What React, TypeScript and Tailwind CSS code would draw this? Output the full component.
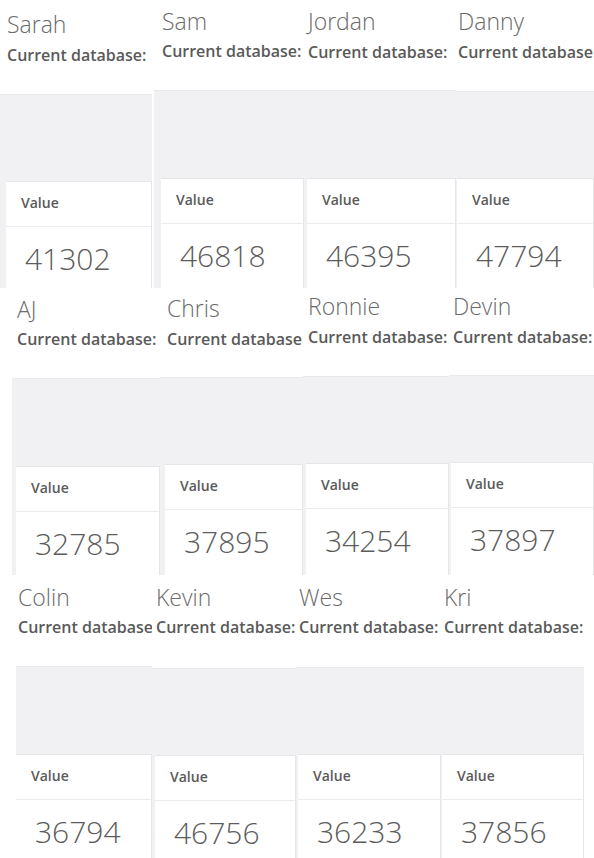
// each tile is a cropped screenshot, so offsets differ a little per tile
type Tile = {
  name: string;
  value: string;
  box: string; // tile width + top padding
  text: string; // left inset of name / label
  label: string;
  panel: string;
  card: string;
};

const rows: { h: string; tiles: Tile[] }[] = [
  {
    h: "h-[288px]",
    tiles: [
      { name: "Sarah", value: "41302", box: "w-[152px] pt-[9px]", text: "pl-[7px]", label: "mt-[5px]", panel: "mt-[28px] pt-[86px]", card: "ml-[6px]" },
      { name: "Sam", value: "46818", box: "w-[152px] pt-[6px]", text: "pl-[10px]", label: "mt-[4px]", panel: "mt-[28px] ml-[2px] pt-[87px]", card: "ml-[7px]" },
      { name: "Jordan", value: "46395", box: "w-[152px] pt-[6px]", text: "pl-[4px]", label: "mt-[5px]", panel: "mt-[27px] pt-[87px]", card: "ml-[3px]" },
      { name: "Danny", value: "47794", box: "w-[138px] pt-[6px]", text: "pl-[2px]", label: "mt-[5px]", panel: "mt-[28px] pt-[86px]", card: "ml-[1px]" },
    ],
  },
  {
    h: "h-[287px]",
    tiles: [
      { name: "AJ", value: "32785", box: "w-[160px] pt-[6px]", text: "pl-[17px]", label: "mt-[4px]", panel: "mt-[28px] ml-[12px] pt-[87px]", card: "ml-[4px]" },
      { name: "Chris", value: "37895", box: "w-[143px] pt-[5px]", text: "pl-[7px]", label: "mt-[5px]", panel: "mt-[27px] pt-[86px]", card: "ml-[5px]" },
      { name: "Ronnie", value: "34254", box: "w-[146px] pt-[3px]", text: "pl-[5px]", label: "mt-[5px]", panel: "mt-[28px] pt-[86px]", card: "ml-[3px]" },
      { name: "Devin", value: "37897", box: "w-[145px] pt-[3px]", text: "pl-[4px]", label: "mt-[5px]", panel: "mt-[27px] pt-[86px]", card: "ml-[2px]" },
    ],
  },
  {
    h: "h-[283px]",
    tiles: [
      { name: "Colin", value: "36794", box: "w-[152px] pt-[7px]", text: "pl-[18px]", label: "mt-[4px]", panel: "mt-[28px] ml-[16px] pt-[87px]", card: "ml-0" },
      { name: "Kevin", value: "46756", box: "w-[144px] pt-[7px]", text: "pl-[4px]", label: "mt-[4px]", panel: "mt-[30px] pt-[86px]", card: "ml-[3px]" },
      { name: "Wes", value: "36233", box: "w-[145px] pt-[7px]", text: "pl-[3px]", label: "mt-[4px]", panel: "mt-[29px] pt-[86px]", card: "ml-[2px]" },
      { name: "Kri", value: "37856", box: "w-[153px] pt-[7px] pr-[10px]", text: "pl-[3px]", label: "mt-[4px]", panel: "mt-[29px] pt-[86px]", card: "ml-[1px]" },
    ],
  },
];

function UserTile({ t }: { t: Tile }) {
  return (
    <div className={`flex flex-col h-full overflow-hidden bg-white shrink-0 ${t.box}`}>
      <div className={`whitespace-nowrap text-[23px] leading-[30px] font-light text-[#6a6a6a] ${t.text}`}>
        {t.name}
      </div>
      <div
        className={`whitespace-nowrap text-[16px] leading-[22px] font-semibold text-[#5a5a5a] ${t.text} ${t.label}`}
      >
        Current database:
      </div>
      <div className={`flex-1 flex flex-col bg-[#f1f1f3] border-t border-[#e9e9ec] ${t.panel}`}>
        <div className={`flex-1 bg-white border-t border-r border-[#e6e6e9] ${t.card}`}>
          <div className="pl-[15px] pt-[11px] pb-[13px] text-[14px] leading-[20px] font-semibold text-[#5a5a5a] border-b border-[#ececef]">
            Value
          </div>
          <div className="pl-[19px] pt-[14px] text-[30px] leading-[36px] font-light text-[#5c5c5c]">
            {t.value}
          </div>
        </div>
      </div>
    </div>
  );
}

export default function App() {
  return (
    <div className="w-[594px] h-[858px] overflow-hidden bg-white font-['Open_Sans',sans-serif]">
      {rows.map((row, i) => (
        <div key={i} className={`flex ${row.h}`}>
          {row.tiles.map((t) => (
            <UserTile key={t.name} t={t} />
          ))}
        </div>
      ))}
    </div>
  );
}
